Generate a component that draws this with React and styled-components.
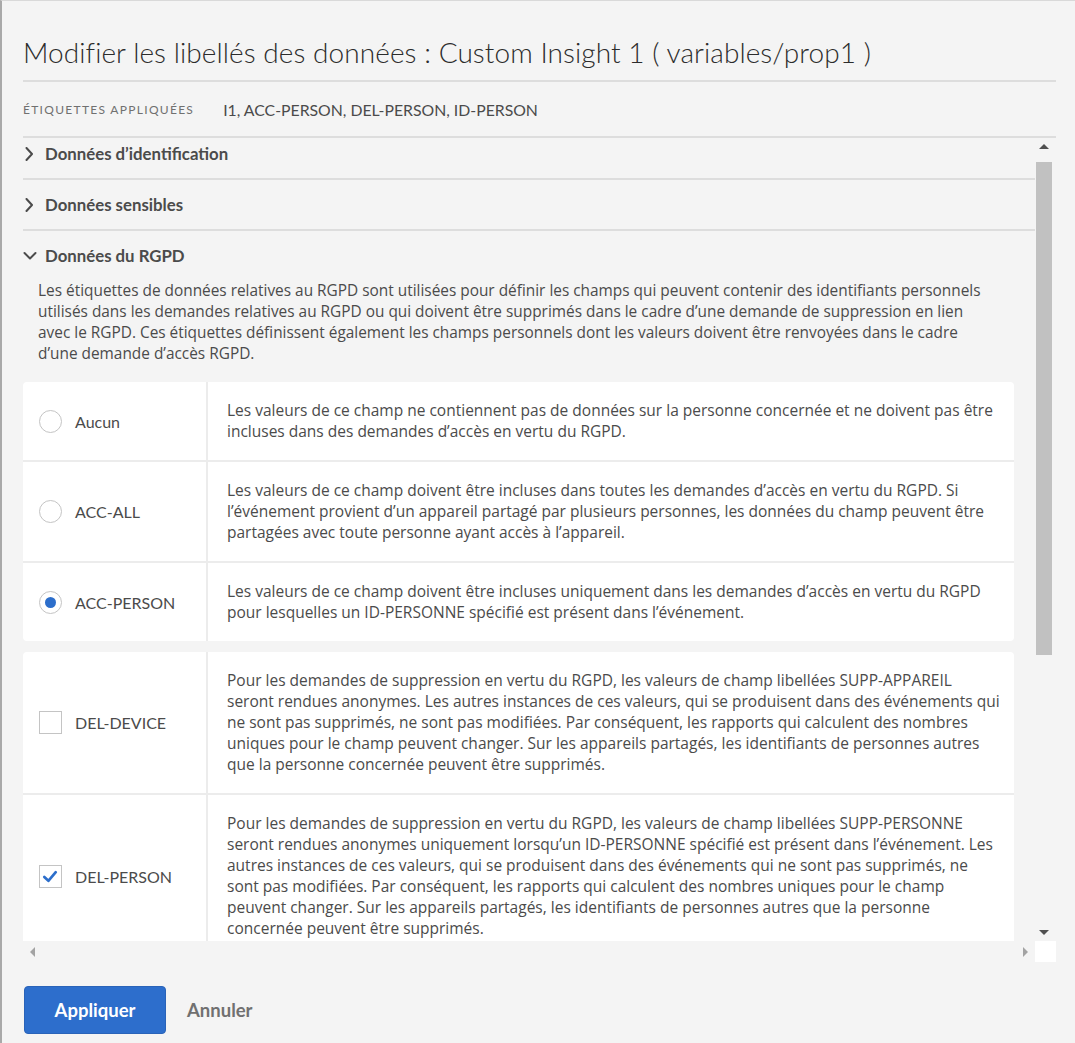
import styled, { createGlobalStyle } from "styled-components";

const GlobalStyle = createGlobalStyle`
  html, body {
    margin: 0;
    padding: 0;
    background: #f4f4f4;
  }
  * {
    box-sizing: border-box;
  }
`;

const sections = [
  { title: "Données d’identification", open: false },
  { title: "Données sensibles", open: false },
];

const accessRows = [
  {
    id: "none",
    label: "Aucun",
    checked: false,
    text: "Les valeurs de ce champ ne contiennent pas de données sur la personne concernée et ne doivent pas être incluses dans des demandes d’accès en vertu du RGPD.",
  },
  {
    id: "acc-all",
    label: "ACC-ALL",
    checked: false,
    text: "Les valeurs de ce champ doivent être incluses dans toutes les demandes d’accès en vertu du RGPD. Si l’événement provient d’un appareil partagé par plusieurs personnes, les données du champ peuvent être partagées avec toute personne ayant accès à l’appareil.",
  },
  {
    id: "acc-person",
    label: "ACC-PERSON",
    checked: true,
    text: "Les valeurs de ce champ doivent être incluses uniquement dans les demandes d’accès en vertu du RGPD pour lesquelles un ID-PERSONNE spécifié est présent dans l’événement.",
  },
];

const deleteRows = [
  {
    id: "del-device",
    label: "DEL-DEVICE",
    checked: false,
    text: "Pour les demandes de suppression en vertu du RGPD, les valeurs de champ libellées SUPP-APPAREIL seront rendues anonymes. Les autres instances de ces valeurs, qui se produisent dans des événements qui ne sont pas supprimés, ne sont pas modifiées. Par conséquent, les rapports qui calculent des nombres uniques pour le champ peuvent changer. Sur les appareils partagés, les identifiants de personnes autres que la personne concernée peuvent être supprimés.",
  },
  {
    id: "del-person",
    label: "DEL-PERSON",
    checked: true,
    text: "Pour les demandes de suppression en vertu du RGPD, les valeurs de champ libellées SUPP-PERSONNE seront rendues anonymes uniquement lorsqu’un ID-PERSONNE spécifié est présent dans l’événement. Les autres instances de ces valeurs, qui se produisent dans des événements qui ne sont pas supprimés, ne sont pas modifiées. Par conséquent, les rapports qui calculent des nombres uniques pour le champ peuvent changer. Sur les appareils partagés, les identifiants de personnes autres que la personne concernée peuvent être supprimés.",
  },
];

function Chevron({ open }) {
  return open ? (
    <ChevronIcon viewBox="0 0 14 14" width="14" height="14">
      <path d="M1.5 4 L7 9.5 L12.5 4" />
    </ChevronIcon>
  ) : (
    <ChevronIcon viewBox="0 0 14 14" width="14" height="14">
      <path d="M3.5 1 L9 7 L3.5 13" />
    </ChevronIcon>
  );
}

function Radio({ checked }) {
  return <RadioCircle $checked={checked} />;
}

function Checkbox({ checked }) {
  return (
    <CheckBox>
      {checked && (
        <svg viewBox="0 0 22 22" width="21" height="21">
          <path
            d="M4.5 11.5 L8.8 15.5 L16.5 6.5"
            fill="none"
            stroke="#2c6ecb"
            strokeWidth="2.8"
            strokeLinecap="round"
            strokeLinejoin="round"
          />
        </svg>
      )}
    </CheckBox>
  );
}

function LabelTable({ rows, kind }) {
  return (
    <Card>
      {rows.map((row) => (
        <Row key={row.id}>
          <Choice>
            {kind === "radio" ? (
              <Radio checked={row.checked} />
            ) : (
              <Checkbox checked={row.checked} />
            )}
            <ChoiceLabel>{row.label}</ChoiceLabel>
          </Choice>
          <RowText>{row.text}</RowText>
        </Row>
      ))}
    </Card>
  );
}

export default function App() {
  return (
    <>
      <GlobalStyle />
      <Dialog>
        <Title>Modifier les libellés des données : Custom Insight 1 ( variables/prop1 )</Title>
        <Applied>
          <AppliedKey>Étiquettes appliquées</AppliedKey>
          <AppliedValue>I1, ACC-PERSON, DEL-PERSON, ID-PERSON</AppliedValue>
        </Applied>

        <ScrollFrame>
          <Viewport>
            <Scrolled>
              {sections.map((s) => (
                <SectionHeader key={s.title}>
                  <Chevron open={s.open} />
                  {s.title}
                </SectionHeader>
              ))}
              <SectionHeader $open>
                <Chevron open />
                Données du RGPD
              </SectionHeader>
              <SectionBody>
                <Intro>
                  Les étiquettes de données relatives au RGPD sont utilisées pour définir les champs qui peuvent contenir des identifiants personnels utilisés dans les demandes relatives au RGPD ou qui doivent être supprimés dans le cadre d’une demande de suppression en lien avec le RGPD. Ces étiquettes définissent également les champs personnels dont les valeurs doivent être renvoyées dans le cadre d’une demande d’accès RGPD.
                </Intro>
                <LabelTable rows={accessRows} kind="radio" />
                <LabelTable rows={deleteRows} kind="check" />
              </SectionBody>
            </Scrolled>
          </Viewport>

          <VScroll>
            <Arrow $dir="up" />
            <VTrack>
              <VThumb />
            </VTrack>
            <Arrow $dir="down" />
          </VScroll>

          <HScroll>
            <Arrow $dir="left" $muted />
            <Arrow $dir="right" $muted />
          </HScroll>
          <Corner />
        </ScrollFrame>

        <Footer>
          <PrimaryButton>Appliquer</PrimaryButton>
          <QuietButton>Annuler</QuietButton>
        </Footer>
      </Dialog>
    </>
  );
}

const font = `Lato, "Open Sans", "Liberation Sans", sans-serif`;
const textFont = `"Open Sans", Lato, "Liberation Sans", sans-serif`;

const Dialog = styled.div`
  width: 1075px;
  height: 1043px;
  display: flex;
  flex-direction: column;
  padding: 0 19px 0 21px;
  background: #f4f4f4;
  border-left: 2px solid #a9a9a9;
  border-top: 1px solid #d9d9d9;
  font-family: ${font};
  color: #4b4b4b;
  overflow: hidden;
`;

const Title = styled.h1`
  margin: 0;
  padding-bottom: 10px;
  height: 81px;
  flex: none;
  display: flex;
  align-items: flex-end;
  border-bottom: 2px solid #dddddd;
  font-size: 28px;
  font-weight: 300;
  line-height: 36px;
  color: #2c2c2c;
  letter-spacing: 0.07px;
`;

const Applied = styled.div`
  height: 56px;
  flex: none;
  display: flex;
  align-items: center;
  gap: 29px;
  border-bottom: 2px solid #dddddd;
`;

const AppliedKey = styled.span`
  font-size: 12px;
  letter-spacing: 1.3px;
  text-transform: uppercase;
  color: #707070;
`;

const AppliedValue = styled.span`
  font-size: 15.8px;
  color: #4b4b4b;
`;

const ScrollFrame = styled.div`
  flex: none;
  display: grid;
  grid-template-columns: 1012px 21px;
  grid-template-rows: 803px 21px;
`;

const Viewport = styled.div`
  overflow: hidden;
`;

const Scrolled = styled.div`
  margin-top: -9px;
`;

const SectionHeader = styled.div`
  height: ${(p) => (p.$open ? "49px" : "51px")};
  display: flex;
  align-items: center;
  gap: 8px;
  border-bottom: ${(p) => (p.$open ? "none" : "2px solid #dddddd")};
  font-size: 16.8px;
  font-weight: 700;
  color: #4b4b4b;
`;

const ChevronIcon = styled.svg`
  flex: none;
  fill: none;
  stroke: #4b4b4b;
  stroke-width: 2;
  stroke-linecap: round;
  stroke-linejoin: round;
`;

const SectionBody = styled.div`
  display: flex;
  flex-direction: column;
  gap: 11px;
  padding-right: 21px;
`;

const Intro = styled.p`
  margin: 0 0 7px;
  padding: 0 28px 0 15px;
  font-family: ${textFont};
  font-size: 15.4px;
  line-height: 21px;
  color: #4b4b4b;
`;

const Card = styled.div`
  background: #ffffff;
  border-radius: 4px;
  display: flex;
  flex-direction: column;
`;

const Row = styled.div`
  display: grid;
  grid-template-columns: 185px 1fr;
  & + & {
    border-top: 2px solid #ececec;
  }
`;

const Choice = styled.div`
  display: flex;
  align-items: center;
  gap: 13px;
  padding-left: 16px;
  border-right: 2px solid #ececec;
`;

const ChoiceLabel = styled.span`
  font-size: 16px;
  color: #4b4b4b;
`;

const RowText = styled.p`
  margin: 0;
  padding: 18px 12px 18px 19px;
  font-family: ${textFont};
  font-size: 15.5px;
  line-height: 21px;
  color: #4b4b4b;
`;

const RadioCircle = styled.span`
  flex: none;
  width: 23px;
  height: 23px;
  border-radius: 50%;
  border: 1px solid #c4c4c4;
  background: #fff;
  display: flex;
  align-items: center;
  justify-content: center;
  &::after {
    content: "";
    width: 11px;
    height: 11px;
    border-radius: 50%;
    background: ${(p) => (p.$checked ? "#2c6ecb" : "transparent")};
  }
`;

const CheckBox = styled.span`
  flex: none;
  width: 23px;
  height: 23px;
  border: 1px solid #c4c4c4;
  background: #fff;
  display: flex;
  align-items: center;
  justify-content: center;
`;

const VScroll = styled.div`
  display: flex;
  flex-direction: column;
  align-items: flex-start;
`;

const VTrack = styled.div`
  flex: 1;
  width: 17px;
  padding-top: 7px;
`;

const VThumb = styled.div`
  width: 16px;
  height: 493px;
  margin-left: 1px;
  background: #c1c1c1;
`;

const arrowShapes = {
  up: "border-left: 5px solid transparent; border-right: 5px solid transparent; border-bottom: 5px solid currentColor;",
  down: "border-left: 5px solid transparent; border-right: 5px solid transparent; border-top: 5px solid currentColor;",
  left: "border-top: 5px solid transparent; border-bottom: 5px solid transparent; border-right: 5px solid currentColor;",
  right: "border-top: 5px solid transparent; border-bottom: 5px solid transparent; border-left: 5px solid currentColor;",
};

const Arrow = styled.span`
  flex: none;
  width: 17px;
  height: 17px;
  display: flex;
  align-items: center;
  justify-content: center;
  color: ${(p) => (p.$muted ? "#a3a3a3" : "#505050")};
  &::before {
    content: "";
    width: 0;
    height: 0;
    ${(p) => arrowShapes[p.$dir]}
  }
`;

const HScroll = styled.div`
  display: flex;
  align-items: center;
  justify-content: space-between;
  padding: 0 1px 0 1px;
`;

const Corner = styled.div`
  background: #ffffff;
`;

const Footer = styled.div`
  display: flex;
  align-items: center;
  gap: 21px;
  margin-top: 24px;
  padding-left: 1px;
`;

const PrimaryButton = styled.button`
  width: 142px;
  height: 48px;
  border: 1px solid #2a63b8;
  border-radius: 4px;
  background: #2d6ecc;
  color: #ffffff;
  font-family: ${font};
  font-size: 18.5px;
  font-weight: 700;
  cursor: pointer;
`;

const QuietButton = styled.button`
  padding: 0;
  border: none;
  background: none;
  color: #707070;
  font-family: ${font};
  font-size: 18.5px;
  font-weight: 700;
  cursor: pointer;
`;
